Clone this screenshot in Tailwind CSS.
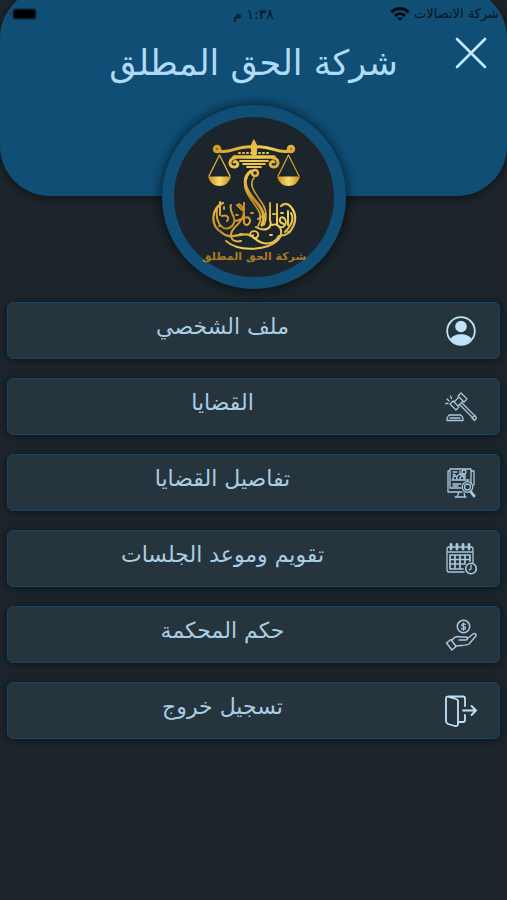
<!DOCTYPE html>
<html lang="ar" dir="rtl">
<head>
  <meta charset="UTF-8">
  <meta name="viewport" content="width=device-width, initial-scale=1.0">
  <title>شركة الحق المطلق</title>
  <script src="https://cdn.jsdelivr.net/npm/@tailwindcss/browser@4"></script>
</head>
<body class="min-h-screen overflow-x-hidden bg-[#1c252b] font-['DejaVu_Sans',sans-serif] text-[#a9cde3]">
  <!-- Header -->
  <header class="-mt-3 h-52 rounded-[50px] bg-[#104e76] pt-3 shadow-[0_2px_8px_rgba(0,0,0,0.5)]">
    <!-- Status bar -->
    <div class="grid h-7 grid-cols-3 items-center px-2 text-sm text-[#07141d]">
      <div class="flex items-center gap-1 whitespace-nowrap text-[13px]">
        <span>شركة الاتصالات</span>
        <svg class="h-4 w-5 shrink-0" viewBox="0 0 20 16" fill="none" stroke="#020a10" stroke-width="3">
          <path d="M1.500 6.200C6.500 1.300 13.500 1.300 18.500 6.200"/>
          <path d="M5 9.800C8 7 12 7 15 9.800"/>
          <path d="M10 15L7.200 12.200C8.800 10.800 11.200 10.800 12.800 12.200Z" fill="#020a10" stroke="none"/>
        </svg>
      </div>
      <span class="text-center">١:٣٨ م</span>
      <svg class="h-3 w-8 justify-self-end" viewBox="0 0 32 12">
        <rect x="4.500" y=".5" width="24" height="11" rx="3" fill="none" stroke="#0b344f"/>
        <rect x="5.500" y="1.500" width="22" height="9" rx="1.500" fill="#000"/>
        <path d="M3 4v4C1.500 7.500 1.500 4.500 3 4Z" fill="#0b2f47"/>
      </svg>
    </div>

    <div class="grid grid-cols-[48px_1fr_48px] items-start px-3 pt-px">
      <button type="button" aria-label="إغلاق" class="flex size-12 items-center justify-center">
        <svg class="size-8" viewBox="0 0 32 32" stroke="#c5e8fc" stroke-width="2.600" stroke-linecap="round">
          <path d="M2 2L30 30M30 2L2 30"/>
        </svg>
      </button>
      <h1 class="pt-1 text-center text-[35px] leading-[60px] whitespace-nowrap text-[#b0dbf6]">شركة الحق المطلق</h1>
    </div>
  </header>

  <!-- Logo -->
  <div class="relative mx-auto -mt-[91px] size-[184px] rounded-full border-[12px] border-[#104e76] bg-[#1c252b] shadow-[0_0_10px_3px_rgba(0,0,0,0.45)]">
    <svg class="size-40" viewBox="0 0 160 160" fill="none" stroke-linecap="round">
      <defs>
        <linearGradient id="gold" gradientUnits="userSpaceOnUse" x1="30" y1="25" x2="130" y2="145">
          <stop offset="0" stop-color="#c98a1c"/>
          <stop offset=".3" stop-color="#f3cf55"/>
          <stop offset=".5" stop-color="#c78a1e"/>
          <stop offset=".7" stop-color="#f5d45c"/>
          <stop offset="1" stop-color="#b87a18"/>
        </linearGradient>
        <linearGradient id="pan" x1="0" y1="0" x2="1" y2="0">
          <stop offset="0" stop-color="#c98a1c"/>
          <stop offset=".5" stop-color="#f8dc70"/>
          <stop offset="1" stop-color="#c98a1c"/>
        </linearGradient>
      </defs>
      <g stroke="url(#gold)">
        <!-- Beam -->
        <path d="M45 34C56 37 64 28 78 30M115 34C104 37 96 28 82 30" stroke-width="3"/>
        <circle cx="43" cy="32" r="2.500" stroke-width="3.500"/>
        <circle cx="117" cy="32" r="2.500" stroke-width="3.500"/>
        <path d="M80 23L83 29L82 38H78L77 29Z" fill="url(#gold)" stroke-width="1"/>
        <!-- Chains and pans -->
        <path d="M45.500 38L35 59M45.500 38L56 59M114.500 38L104 59M114.500 38L125 59" stroke-width="1.300"/>
        <path d="M34 59.500H57C55 66 51 69 45.500 69S36 66 34 59.500Z" fill="url(#pan)" stroke="none"/>
        <path d="M103 59.500H126C124 66 120 69 114.500 69S105 66 103 59.500Z" fill="url(#pan)" stroke="none"/>
        <!-- Capital -->
        <path d="M65 36H95" stroke-width="2" stroke-dasharray="1 3"/>
        <path d="M60 40H100" stroke-width="3.500"/>
        <path d="M61 41C55 41 54 50 60 50S64 43 60 45M99 41C105 41 106 50 100 50S96 43 100 45" stroke-width="3"/>
        <path d="M66 44H94M69 47H91M73 50H87" stroke-width="1.800"/>
        <!-- Column -->
        <circle cx="81" cy="56" r="3" stroke-width="2.500"/>
        <path d="M77 54C65 63 74 76 83 86C90 94 91 100 88 108" stroke-width="3"/>
        <path d="M80 61C74 67 81 76 88 86C94 95 92 104 90 108M73 61C66 70 77 82 83 91C88 98 87 104 84 109" stroke-width="1.600"/>
        <!-- Calligraphy -->
        <path d="M49 86C36 92 37 109 47 115C57 125 69 113 78 119C88 129 99 129 105 119C119 119 126 101 117 90C114 86 110 86 107 89" stroke-width="2.200"/>
        <path d="M43 92C41 108 51 116 58 109C65 101 54 96 57 88M52 124C66 136 94 133 104 123C111 115 105 105 98 108M65 87C75 94 67 105 61 110C53 119 58 126 67 124" stroke-width="2"/>
        <path d="M46 85V98M48 99C53 97 56 101 53 104M70 86V106C73 111 78 105 75 101C72 98 67 104 61 104M96 86V103C99 112 90 115 82 110M103 87V108C109 114 115 106 110 101C106 98 103 105 110 107M114 94V108M117 96C121 103 117 109 111 115" stroke-width="2"/>
        <path d="M76 119C75 112 86 113 84 119C82 123 77 121 79 118M63 88L68 93M91 97L84 102M50 90V92M62 98H64M77 96H79M99 97H101M107 96H109M66 117H68M96 118H98M45 109H47M114 115H116M57 119H59" stroke-width="1.800"/>
      </g>
      <text x="80" y="143" direction="rtl" text-anchor="middle" font-family="DejaVu Sans, sans-serif" font-size="11" font-weight="bold" fill="#a87a26">شركة الحق المطلق</text>
    </svg>
  </div>

  <!-- Menu -->
  <nav class="mt-[13px] flex flex-col gap-[19px] px-[7px] text-[22px] leading-7">
    <button type="button" class="flex h-[57px] items-center gap-2 rounded-md border border-[#114669] bg-[#26343d] pr-[22px] shadow-[0_1px_8px_rgba(0,0,0,0.5)]">
      <svg class="size-8 shrink-0" viewBox="0 0 32 32" fill="none" stroke="#bfe3f8">
        <circle cx="16" cy="16" r="13.800" stroke-width="1.800"/>
        <circle cx="16" cy="11.500" r="5.800" fill="#bfe3f8" stroke="none"/>
        <path d="M5.500 24C8 17.500 24 17.500 26.500 24C21 31 11 31 5.500 24Z" fill="#bfe3f8" stroke="none"/>
      </svg>
      <span class="flex-1 pb-2">ملف الشخصي</span>
    </button>
    <button type="button" class="flex h-[57px] items-center gap-2 rounded-md border border-[#114669] bg-[#26343d] pr-[22px] shadow-[0_1px_8px_rgba(0,0,0,0.5)]">
      <svg class="size-8 shrink-0" viewBox="0 0 32 32" fill="none" stroke="#a9c8da" stroke-width="1.300" stroke-linejoin="round" stroke-linecap="round">
        <path d="M13 5L16 2L22 8L19 11ZM5 13L8 10L14 16L11 19ZM14 6L9 11L13 15L18 10M17 12L30 25M15 14L28 27"/>
        <path d="M27 27L30 24.500L31.500 27L29.500 29.500ZM4 24H16L18 27V29.500H2V27ZM5 27H15"/>
        <path d="M2 8L4 10M.700 12.500H3M5.500 5L6.500 7.500"/>
      </svg>
      <span class="flex-1 pb-2">القضايا</span>
    </button>
    <button type="button" class="flex h-[57px] items-center gap-2 rounded-md border border-[#114669] bg-[#26343d] pr-[22px] shadow-[0_1px_8px_rgba(0,0,0,0.5)]">
      <svg class="size-8 shrink-0" viewBox="0 0 32 32" fill="none" stroke="#a9c8da" stroke-width="1.300" stroke-linejoin="round" stroke-linecap="round">
        <path d="M5 4H3V25H17M26 4H29V18M5 21V2H26V16M5 21H16"/>
        <path d="M8 5H12M8 7.500H10M15 4V7M8 17H16M8 19H13M7 13H24M8 12C8 8 12 8 12 12M15 12C15 8 19 8 19 12M20 8V11M12 9L15 7L20 8"/>
        <circle cx="19" cy="5" r="2"/>
        <circle cx="22.500" cy="20" r="5.300"/>
        <circle cx="22.500" cy="20" r="3"/>
        <path d="M26 24L30 29M25 25L29 30M14 25L12 30H20L19 26M10 30H21"/>
      </svg>
      <span class="flex-1 pb-2">تفاصيل القضايا</span>
    </button>
    <button type="button" class="flex h-[57px] items-center gap-2 rounded-md border border-[#114669] bg-[#26343d] pr-[22px] shadow-[0_1px_8px_rgba(0,0,0,0.5)]">
      <svg class="size-8 shrink-0" viewBox="0 0 32 32" fill="none" stroke="#a9c8da" stroke-width="1.300" stroke-linejoin="round" stroke-linecap="round">
        <path d="M19 29H4Q2 29 2 27V6Q2 4 4 4H26Q28 4 28 6V20M2 9H28"/>
        <path d="M6 1.500V6M12 1.500V6M18 1.500V6M24 1.500V6" stroke-width="2.800"/>
        <path d="M5 12H25V18M5 12V26H18M5 16.500H25M5 21H20M10 12V26M15 12V26M20 12V20" stroke-width="1.700"/>
        <circle cx="26" cy="25.500" r="5.300" fill="#26343d" stroke-width="1.600"/>
        <path d="M26 22V26L24 27"/>
      </svg>
      <span class="flex-1 pb-2">تقويم وموعد الجلسات</span>
    </button>
    <button type="button" class="flex h-[57px] items-center gap-2 rounded-md border border-[#114669] bg-[#26343d] pr-[22px] shadow-[0_1px_8px_rgba(0,0,0,0.5)]">
      <svg class="size-8 shrink-0" viewBox="0 0 32 32" fill="none" stroke="#a9c8da" stroke-width="1.500" stroke-linejoin="round" stroke-linecap="round">
        <circle cx="18.500" cy="7.500" r="6.200"/>
        <path d="M20.500 5.500C19.500 4.300 16.700 4.500 16.700 6.200S20.600 7.300 20.600 9S17.500 10.800 16.400 9.300M18.500 3.800V11.200" stroke-width="1.200"/>
        <path d="M1.500 24L6 20.500L11 27.500L7 31ZM7 21C10 17 13 17 16 18H21C23 18 23 21 21 21H14M22 20L28 15C30 13.500 32 15.500 30.500 17.500L24 25C21 27 15 26 11 27"/>
      </svg>
      <span class="flex-1 pb-2">حكم المحكمة</span>
    </button>
    <button type="button" class="flex h-[57px] items-center gap-2 rounded-md border border-[#114669] bg-[#26343d] pr-[22px] shadow-[0_1px_8px_rgba(0,0,0,0.5)]">
      <svg class="size-8 shrink-0" viewBox="0 0 32 32" fill="none" stroke="#bfe3f8" stroke-width="1.800" stroke-linejoin="round" stroke-linecap="round">
        <path d="M1 3V26C1 28 2 28.500 3 29L10 31Q13 31.500 13 29V6Q13 4.500 11 4L4 2Q1 1 1 3ZM3 1.500H18Q20 1.500 20 3.500V11M13 27H18Q20 27 20 25V20"/>
        <path d="M18 15.500H31M26.500 11L31 15.500L26.500 20"/>
      </svg>
      <span class="flex-1 pb-2">تسجيل خروج</span>
    </button>
  </nav>
</body>
</html>
